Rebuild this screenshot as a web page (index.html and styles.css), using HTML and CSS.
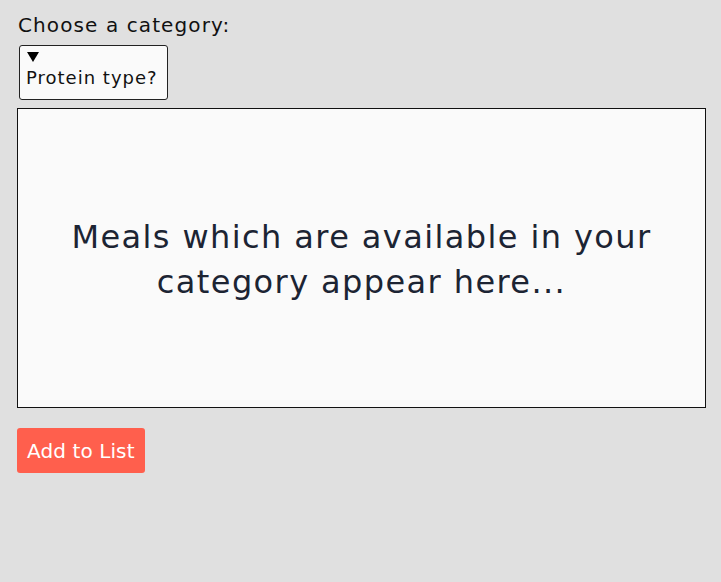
FILE: index.html
```html
<!DOCTYPE html>
<html lang="en">
<head>
<meta charset="utf-8">
<title>Meals</title>
<link rel="stylesheet" href="styles.css">
</head>
<body>
<main class="page">
  <label class="label">Choose a category:</label>
  <details class="picker" open>
    <summary class="picker-summary"><div class="picker-text">Protein type?</div></summary>
  </details>
  <section class="meals">
    <p class="meals-text">Meals which are available in your category appear here...</p>
  </section>
  <button class="add-btn" type="button">Add to List</button>
</main>
</body>
</html>
```
FILE: styles.css
```css
html, body {
  margin: 0;
  padding: 0;
  background: #e0e0e0;
  font-family: "DejaVu Sans", Verdana, sans-serif;
}
.page {
  padding: 12px 15px 0 17px;
  display: flex;
  flex-direction: column;
  align-items: flex-start;
}
.label {
  font-size: 20px;
  letter-spacing: 1.1px;
  line-height: 26px;
  color: #111;
  margin-left: 1px;
}
.picker {
  margin: 7px 0 8px 2px;
  border: 1px solid #222;
  border-radius: 3px;
  background: #fafafa;
  padding: 4px 9px 10px 6px;
  font-size: 18px;
  letter-spacing: 1px;
}
.picker-summary {
  cursor: pointer;
  line-height: 23px;
  list-style: none;
}
.picker-summary::-webkit-details-marker { display: none; }
.picker-summary::before {
  content: "";
  display: block;
  width: 0;
  height: 0;
  margin: 2px 0 4px 1px;
  border-left: 6.5px solid transparent;
  border-right: 6.5px solid transparent;
  border-top: 10px solid #000;
}
.picker-text {
  color: #111;
}
.meals {
  align-self: stretch;
  box-sizing: border-box;
  height: 300px;
  border: 1px solid #111;
  background: #fafafa;
  display: flex;
  align-items: center;
  justify-content: center;
}
.meals-text {
  margin: 0 0 -4px;
  text-align: center;
  font-size: 32px;
  letter-spacing: 1.4px;
  line-height: 45px;
  color: #1c2433;
  padding: 0 30px;
}
.add-btn {
  margin-top: 20px;
  background: #ff5f4d;
  color: #fff;
  border: none;
  border-radius: 3px;
  font-family: inherit;
  font-size: 20px;
  letter-spacing: 0.1px;
  padding: 0 10px;
  height: 45px;
}
```
